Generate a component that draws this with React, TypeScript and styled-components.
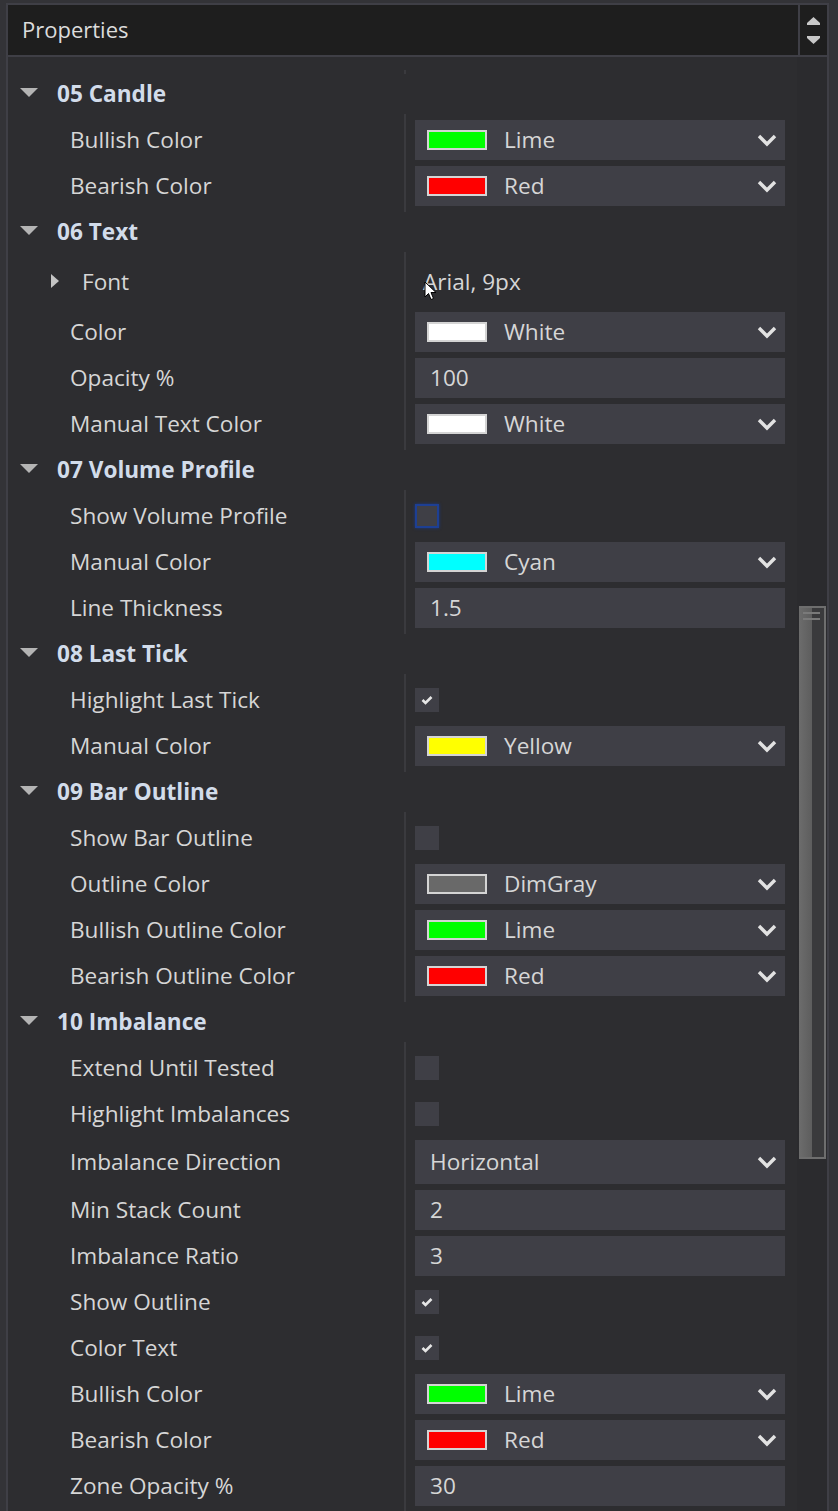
import React from "react";
import styled, { createGlobalStyle } from "styled-components";

const GlobalStyle = createGlobalStyle`
  html, body {
    margin: 0;
    padding: 0;
    background: #333337;
  }
  body {
    font-family: "Open Sans", "Noto Sans", sans-serif;
    overflow: hidden;
  }
`;

const Panel = styled.div`
  margin: 3px 0 0 6px;
  width: 823px;
  height: 1508px;
  box-sizing: border-box;
  border: 2px solid #3f3f46;
  border-bottom: none;
  display: flex;
  flex-direction: column;
  overflow: hidden;
`;

const Header = styled.div`
  display: flex;
  height: 50px;
  flex-shrink: 0;
  background: #1e1e1e;
  border-bottom: 2px solid #3f3f46;
`;

const Title = styled.div`
  flex: 1;
  display: flex;
  align-items: center;
  padding: 0 0 2px 14px;
  font-size: 22px;
  color: #dcdcdc;
`;

const Spinner = styled.div`
  width: 27px;
  border-left: 2px solid #3f3f46;
  display: flex;
  flex-direction: column;
  align-items: center;
  justify-content: space-between;
  padding: 12px 0 11px;
`;

const Body = styled.div`
  flex: 1;
  display: flex;
  background: #2d2d30;
`;

const Content = styled.div`
  width: 789px;
  display: flex;
  flex-direction: column;
`;

const Track = styled.div`
  width: 30px;
  display: flex;
  flex-direction: column;
  background: #2b2b2e;
`;

const Thumb = styled.div`
  margin: 549px 1px 0 2px;
  height: 553px;
  box-sizing: border-box;
  border: 2px solid #6e6e6e;
  border-left: none;
  background: linear-gradient(90deg, #6c6c6c 0%, #5e5e5e 50%, #3a3a3c 50%, #3a3a3c 100%);
  display: flex;
  flex-direction: column;
  align-items: center;
  gap: 4px;
  padding: 4px 0 0 0;
`;

const Grip = styled.div`
  width: 17px;
  height: 2px;
  background: #7a7a7a;
`;

const Stub = styled.div`
  position: relative;
  height: 17px;
  &::after {
    content: "";
    position: absolute;
    left: 396px;
    top: 13px;
    width: 2px;
    height: 4px;
    background: #3a3a3e;
  }
`;

const SectionHead = styled.div`
  height: 40px;
  display: flex;
  align-items: center;
  padding: 0 0 2px 12px;
  box-sizing: border-box;
  gap: 19px;
  font-size: 22.6px;
  font-weight: 700;
  color: #d2dcea;
`;

const Group = styled.div`
  position: relative;
  padding: 3px 0;
  &::before {
    content: "";
    position: absolute;
    left: 396px;
    top: 0;
    bottom: 0;
    width: 2px;
    background: #3a3a3e;
  }
`;

const Row = styled.div<{ $h: number }>`
  display: grid;
  grid-template-columns: 398px 1fr;
  height: ${({ $h }) => $h}px;
`;

const Label = styled.div<{ $indent?: boolean }>`
  display: flex;
  align-items: center;
  gap: 23px;
  padding: 0 0 2px ${({ $indent }) => ($indent ? "43px" : "62px")};
  font-size: 22.6px;
  color: #d6d6d6;
  white-space: nowrap;
`;

const Value = styled.div`
  position: relative;
  display: flex;
  align-items: center;
  padding: 3px 12px 3px 9px;
`;

const Box = styled.div<{ $swatch?: boolean }>`
  flex: 1;
  height: 100%;
  display: flex;
  align-items: center;
  gap: 17px;
  padding: ${({ $swatch }) => ($swatch ? "0 8px 0 12px" : "0 8px 0 15px")};
  background: #3f3f46;
  font-size: 22.6px;
  color: #d6d6d6;
`;

const BoxText = styled.span`
  flex: 1;
  padding-bottom: 2px;
`;

const Swatch = styled.span<{ $c: string }>`
  width: 60px;
  height: 20px;
  box-sizing: border-box;
  border: 2px solid #d4d4d4;
  background: ${({ $c }) => $c};
`;

const PlainText = styled.span`
  padding: 0 0 2px 8px;
  font-size: 22.6px;
  color: #d6d6d6;
`;

const Check = styled.div<{ $focus?: boolean }>`
  width: 24px;
  height: 24px;
  box-sizing: border-box;
  background: #3f3f46;
  display: flex;
  align-items: center;
  justify-content: center;
  border: ${({ $focus }) => ($focus ? "2px solid #1d3f94" : "none")};
  box-shadow: ${({ $focus }) => ($focus ? "0 0 3px #1b3a8a" : "none")};
`;

const Cursor = styled.svg`
  position: absolute;
  left: 18px;
  top: 26px;
`;

type Kind = "color" | "text" | "check" | "select" | "expand";

type Prop = {
  label: string;
  kind: Kind;
  value?: string;
  swatch?: string;
  checked?: boolean;
  focus?: boolean;
};

type Section = { title: string; rows: Prop[] };

const sections: Section[] = [
  {
    title: "05 Candle",
    rows: [
      { label: "Bullish Color", kind: "color", value: "Lime", swatch: "#00ff00" },
      { label: "Bearish Color", kind: "color", value: "Red", swatch: "#ff0000" },
    ],
  },
  {
    title: "06 Text",
    rows: [
      { label: "Font", kind: "expand", value: "Arial, 9px" },
      { label: "Color", kind: "color", value: "White", swatch: "#ffffff" },
      { label: "Opacity %", kind: "text", value: "100" },
      { label: "Manual Text Color", kind: "color", value: "White", swatch: "#ffffff" },
    ],
  },
  {
    title: "07 Volume Profile",
    rows: [
      { label: "Show Volume Profile", kind: "check", focus: true },
      { label: "Manual Color", kind: "color", value: "Cyan", swatch: "#00ffff" },
      { label: "Line Thickness", kind: "text", value: "1.5" },
    ],
  },
  {
    title: "08 Last Tick",
    rows: [
      { label: "Highlight Last Tick", kind: "check", checked: true },
      { label: "Manual Color", kind: "color", value: "Yellow", swatch: "#ffff00" },
    ],
  },
  {
    title: "09 Bar Outline",
    rows: [
      { label: "Show Bar Outline", kind: "check" },
      { label: "Outline Color", kind: "color", value: "DimGray", swatch: "#696969" },
      { label: "Bullish Outline Color", kind: "color", value: "Lime", swatch: "#00ff00" },
      { label: "Bearish Outline Color", kind: "color", value: "Red", swatch: "#ff0000" },
    ],
  },
  {
    title: "10 Imbalance",
    rows: [
      { label: "Extend Until Tested", kind: "check" },
      { label: "Highlight Imbalances", kind: "check" },
      { label: "Imbalance Direction", kind: "select", value: "Horizontal" },
      { label: "Min Stack Count", kind: "text", value: "2" },
      { label: "Imbalance Ratio", kind: "text", value: "3" },
      { label: "Show Outline", kind: "check", checked: true },
      { label: "Color Text", kind: "check", checked: true },
      { label: "Bullish Color", kind: "color", value: "Lime", swatch: "#00ff00" },
      { label: "Bearish Color", kind: "color", value: "Red", swatch: "#ff0000" },
      { label: "Zone Opacity %", kind: "text", value: "30" },
    ],
  },
];

const Chevron = () => (
  <svg width="20" height="14" viewBox="0 0 20 14">
    <polyline points="2,3 10,11 18,3" fill="none" stroke="#e2e2e2" strokeWidth="3.4" />
  </svg>
);

const DownCaret = () => (
  <svg width="18" height="10" viewBox="0 0 18 10">
    <polygon points="0,0 18,0 9,9" fill="#b4b4b4" />
  </svg>
);

const RightCaret = () => (
  <svg width="8" height="14" viewBox="0 0 8 14">
    <polygon points="0,0 8,7 0,14" fill="#c4c4c4" />
  </svg>
);

const Tick = () => (
  <svg width="12" height="10" viewBox="0 0 12 10">
    <polyline points="1.5,5 4.5,8 10.5,2" fill="none" stroke="#e6e6e6" strokeWidth="2.6" />
  </svg>
);

const rowHeight = (kind: Kind) => (kind === "expand" ? 54 : kind === "select" ? 50 : 46);

const PropRow = ({ p }: { p: Prop }) => {
  let value: React.ReactNode = null;
  if (p.kind === "color") {
    value = (
      <Box $swatch>
        <Swatch $c={p.swatch || "#000"} />
        <BoxText>{p.value}</BoxText>
        <Chevron />
      </Box>
    );
  } else if (p.kind === "text") {
    value = (
      <Box>
        <BoxText>{p.value}</BoxText>
      </Box>
    );
  } else if (p.kind === "select") {
    value = (
      <Box>
        <BoxText>{p.value}</BoxText>
        <Chevron />
      </Box>
    );
  } else if (p.kind === "check") {
    value = <Check $focus={p.focus}>{p.checked && <Tick />}</Check>;
  } else {
    value = (
      <>
        <PlainText>{p.value}</PlainText>
        <Cursor width="13" height="20" viewBox="0 0 13 20">
          <polygon points="1,1 1,16 4.5,12.5 7,18.5 9.5,17.5 7,11.5 12,11.5" fill="#ffffff" stroke="#000000" strokeWidth="1" />
        </Cursor>
      </>
    );
  }
  return (
    <Row $h={rowHeight(p.kind)}>
      <Label $indent={p.kind === "expand"}>
        {p.kind === "expand" && <RightCaret />}
        {p.label}
      </Label>
      <Value>{value}</Value>
    </Row>
  );
};

export default function App() {
  return (
    <>
      <GlobalStyle />
      <Panel>
        <Header>
          <Title>Properties</Title>
          <Spinner>
            <svg width="13" height="8" viewBox="0 0 13 8">
              <polygon points="6.5,0 13,6 13,8 0,8 0,6" fill="#c8c8c8" />
            </svg>
            <svg width="13" height="8" viewBox="0 0 13 8">
              <polygon points="0,0 13,0 13,2 6.5,8 0,2" fill="#c8c8c8" />
            </svg>
          </Spinner>
        </Header>
        <Body>
          <Content>
            <Stub />
            {sections.map((s) => (
              <React.Fragment key={s.title}>
                <SectionHead>
                  <DownCaret />
                  {s.title}
                </SectionHead>
                <Group>
                  {s.rows.map((p, i) => (
                    <PropRow key={i} p={p} />
                  ))}
                </Group>
              </React.Fragment>
            ))}
          </Content>
          <Track>
            <Thumb>
              <Grip />
              <Grip />
            </Thumb>
          </Track>
        </Body>
      </Panel>
    </>
  );
}
